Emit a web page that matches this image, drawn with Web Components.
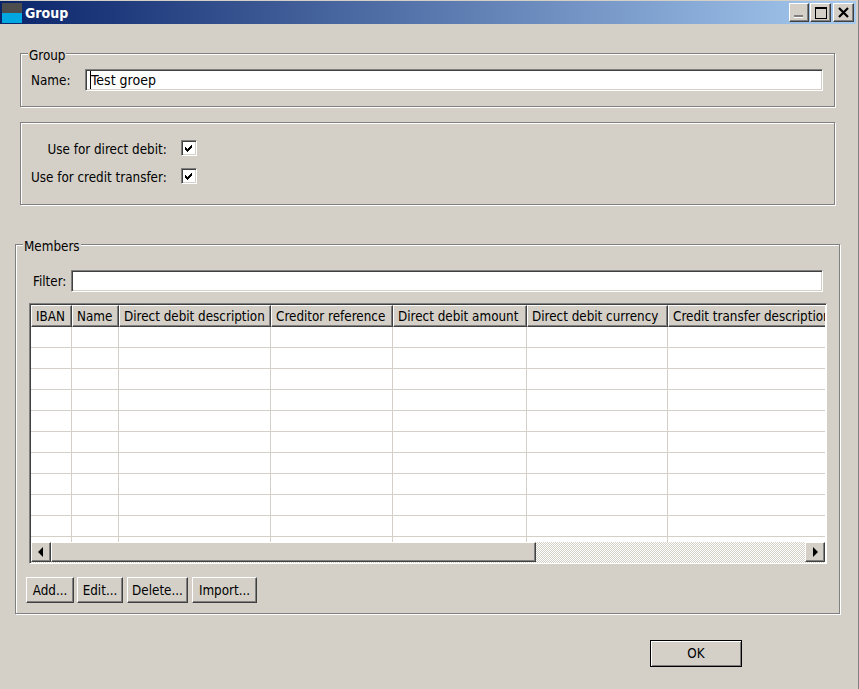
<!doctype html><html><head><meta charset="utf-8"><style>
html,body{margin:0;height:100%;background:#d4d0c8}
body{font:13.33px "DejaVu Sans Condensed","DejaVu Sans",sans-serif;color:#000}
</style></head><body>
<group-dialog title="Group">
  <win-group legend="Group" style="--top:15px;--left:10px;margin:29px 0 0 20px;width:815px;height:54px">
    <form-row label="Name:" style="--label:54px"><win-input value="Test groep" caret style="width:738px"></win-input></form-row>
  </win-group>
  <win-group style="--top:17px;--left:10px;margin:15px 0 0 20px;width:815px;height:83px">
    <check-list>
      <check-row>Use for direct debit:</check-row>
      <check-row>Use for credit transfer:</check-row>
    </check-list>
  </win-group>
  <win-group legend="Members" style="--top:25px;--left:10px;margin:39px 0 0 15px;width:825px;height:370px">
    <form-row label="Filter:" style="--label:38px;margin-left:7px"><win-input style="width:752px"></win-input></form-row>
    <data-grid style="margin:11px 0 0 3px"></data-grid>
    <button-row style="margin-top:13px">
      <win-button style="width:48px">Add...</win-button>
      <win-button style="width:46px">Edit...</win-button>
      <win-button style="width:61px;margin-left:1px">Delete...</win-button>
      <win-button style="width:65px;margin-left:1px">Import...</win-button>
    </button-row>
  </win-group>
  <button-row style="margin:26px 0 0 650px"><win-button default style="width:92px;height:27px">OK</win-button></button-row>
</group-dialog>
<script>
const RAISED=`border:1px solid;border-color:#fff #404040 #404040 #fff;box-shadow:inset -1px -1px 0 #808080;background:#d4d0c8;box-sizing:border-box;`;
const SUNKEN=`border:1px solid;border-color:#808080 #fff #fff #808080;box-shadow:inset 1px 1px 0 #404040,inset -1px -1px 0 #d4d0c8;box-sizing:border-box;`;
function def(name,html){customElements.define(name,class extends HTMLElement{
  connectedCallback(){if(this.shadowRoot)return;const r=this.attachShadow({mode:'open'});r.innerHTML=typeof html==='function'?html(this):html;}
});}
def('group-dialog',el=>`<style>:host{display:flex;flex-direction:column;width:859px;height:689px;box-sizing:border-box;padding-top:1px;position:relative;overflow:hidden}
.edge{position:absolute;right:0;top:0;bottom:0;width:1px;background:#808080}
.tb{display:flex;align-items:center;height:23px;width:856px;flex:none;background:linear-gradient(90deg,#0a246a,#a6caf0);color:#fff;font:bold 14px "DejaVu Sans Condensed","DejaVu Sans",sans-serif}
.ico{width:20px;height:20px;margin:0 3px 0 2px;background:linear-gradient(#4d4d4d 50%,#00a7e1 50%);flex:none}
.t{flex:1}
.c{display:flex;margin-right:2px}
.c span{width:21px;height:19px;display:flex;align-items:center;justify-content:center;${RAISED}}
.c span:first-child{width:20px}.c span+span{margin-left:1px}.c span:last-child{margin-left:2px}
svg{display:block}
</style><div class="edge"></div><div class="tb"><div class="ico"></div><div class="t">${el.getAttribute('title')}</div>
<div class="c"><span><svg width="12" height="13" shape-rendering="crispEdges"><rect x="1" y="9" width="9" height="2" fill="#808080"/><rect x="1" y="11" width="9" height="1" fill="#fff"/></svg></span>
<span><svg width="12" height="13" shape-rendering="crispEdges"><path d="M.5 1.5h11v11H.5z" fill="none" stroke="#000"/><path d="M0 1h12v2H0z"/></svg></span>
<span><svg width="11" height="11"><path d="M1 1l9 9M10 1l-9 9" stroke="#000" stroke-width="2.2" fill="none"/></svg></span></div></div><slot></slot>`);
def('win-group',el=>{const l=el.getAttribute('legend');return `<style>:host{display:block;flex:none;position:relative;box-sizing:border-box;border:1px solid #808080;box-shadow:1px 1px 0 #fff,inset 1px 1px 0 #fff;padding:var(--top) 0 0 var(--left)}
.lg{position:absolute;left:7px;top:-5px;padding:0 1px;line-height:14px;background:#d4d0c8}</style>${l?`<div class="lg">${l}</div>`:''}<slot></slot>`});
def('form-row',el=>`<style>:host{display:flex;align-items:center}.l{width:var(--label);flex:none}</style><div class="l">${el.getAttribute('label')}</div><slot></slot>`);
def('win-input',el=>`<style>:host{display:block;position:relative;height:22px;background:#fff;${SUNKEN}padding:2px 0 0 5px;line-height:17px;flex:none;font-size:14px}
.caret{position:absolute;left:4px;top:1px;width:1px;height:18px;background:#000}</style>${el.hasAttribute('caret')?'<div class="caret"></div>':''}${el.getAttribute('value')||''}`);
def('check-list',`<style>:host{display:grid;grid-template-columns:max-content 16px;column-gap:14px;row-gap:12px;justify-items:end;align-items:center;line-height:16px}</style><slot></slot>`);
def('check-row',`<style>:host{display:contents}.b{width:16px;height:16px;background:#fff;${SUNKEN}display:flex;align-items:center;justify-content:center;padding:0 1px 0 0}svg{display:block}.l{justify-self:end;height:16px;padding-top:2px;box-sizing:border-box}</style>
<div class="l"><slot></slot></div><div class="b"><svg width="7" height="7" shape-rendering="crispEdges"><path d="M0 2h1v3H0zM1 3h1v3H1zM2 4h1v3H2zM3 3h1v3H3zM4 2h1v3H4zM5 1h1v3H5zM6 0h1v3H6z"/></svg></div>`);
def('button-row',`<style>:host{display:flex;gap:3px}</style><slot></slot>`);
def('win-button',el=>{const d=el.hasAttribute('default');return `<style>:host{display:flex;align-items:center;justify-content:center;height:26px;flex:none;${RAISED}${d?'border:1px solid #000;box-shadow:inset 1px 1px 0 #fff,inset -1px -1px 0 #808080;':''}}</style><slot></slot>`});
def('data-grid',()=>{const w=[41,47,152,122,134,141,170];const h=['IBAN','Name','Direct debit description','Creditor reference','Direct debit amount','Direct debit currency','Credit transfer description'];
const cols=w.map(x=>x+'px').join(' ');
const head=h.map(t=>`<div class="h">${t}</div>`).join('');
let rows='';for(let i=0;i<11;i++)rows+=`<div class="r">${w.map(()=>'<div class="c"></div>').join('')}</div>`;
return `<style>:host{display:flex;flex-direction:column;width:798px;height:261px;background:#fff;${SUNKEN}padding:1px 1px 0 1px;box-shadow:inset 1px 1px 0 #404040}
.v{flex:1;overflow:hidden;min-height:0}
.hr,.r{display:grid;grid-template-columns:${cols};width:max-content}
.hr{height:22px}
.h{${RAISED}height:22px;padding-left:4px;line-height:22px;white-space:nowrap;overflow:hidden}
.r{height:21px}.c{border-right:1px solid #d4d0c8;border-bottom:1px solid #d4d0c8;box-sizing:border-box;height:21px}
.sb{height:21px;flex:none;display:flex;background:repeating-conic-gradient(#fff 0 25%,#d4d0c8 0 50%) 0 0/2px 2px}
.btn{width:20px;height:20px;flex:none;${RAISED}display:flex;align-items:center;justify-content:center}
.th{width:485px;height:20px;${RAISED}}
.sp{flex:1}svg{display:block}</style>
<div class="v"><div class="hr">${head}</div>${rows}</div>
<div class="sb"><div class="btn"><svg width="6" height="10"><path d="M5 0v10L0 5z"/></svg></div><div class="th"></div><div class="sp"></div><div class="btn"><svg width="6" height="10"><path d="M1 0v10l5-5z"/></svg></div></div>`});
</script></body></html>
